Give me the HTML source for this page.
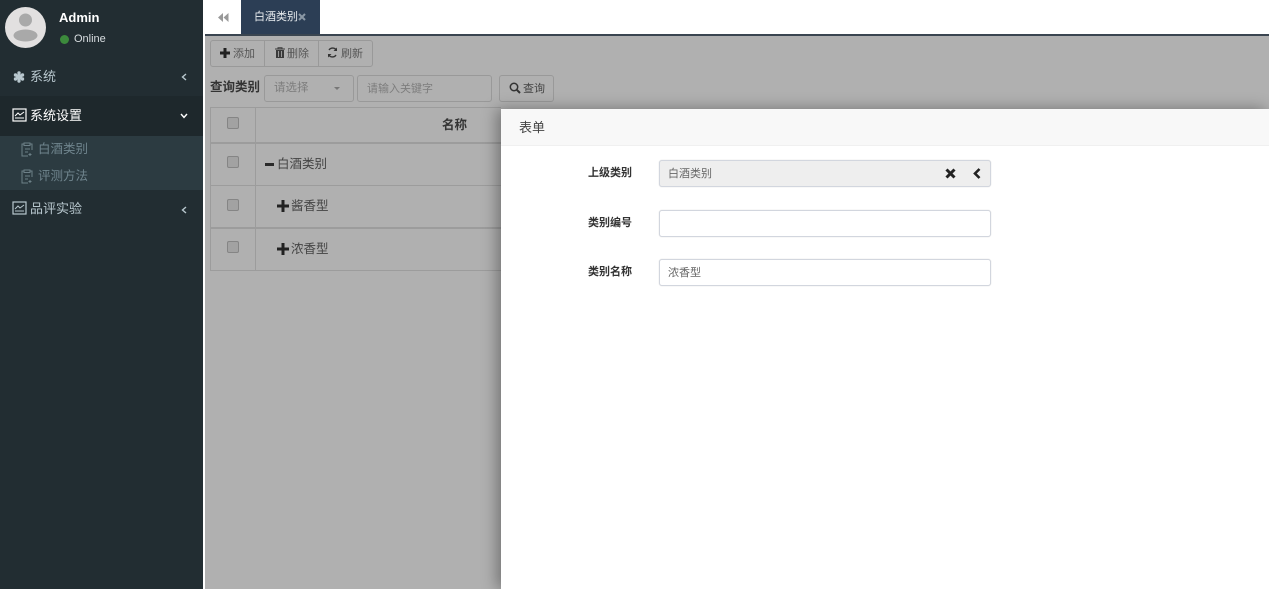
<!DOCTYPE html>
<html lang="zh">
<head>
<meta charset="utf-8">
<style>
html,body{margin:0;padding:0;width:1269px;height:589px;overflow:hidden;background:#fff;font-family:"Liberation Sans","Noto Sans CJK SC",sans-serif;}
.a{position:absolute;white-space:nowrap;}
#side{position:absolute;left:0;top:0;width:203px;height:589px;background:#222d32;}
#main{position:absolute;left:205px;top:36px;width:1064px;height:553px;background:#b0b0b0;}
.btn{position:absolute;box-sizing:border-box;border:1px solid #999;background:#b0b0b0;height:27px;}
.t{font-size:12.5px;line-height:16px;}
.s{font-size:13px;line-height:16px;}
.cb{position:absolute;left:227px;width:10px;height:10px;border:1px solid #858585;border-radius:2px;background:#a2a2a2;}
.hl{position:absolute;left:210px;width:291px;height:1px;background:#9c9c9c;}
.inp{position:absolute;left:659px;width:332px;height:27px;box-sizing:border-box;border:1px solid #d2d6de;border-radius:3px;background:#fff;box-shadow:0 0 1px #ccc;}
.lb{font-size:11px;font-weight:bold;color:#333;line-height:16px;}
</style>
</head>
<body>
<div id="side"></div>
<svg class="a" style="left:5px;top:7px" width="41" height="41" viewBox="0 0 41 41"><circle cx="20.5" cy="20.5" r="20.5" fill="#e2e0e0"/><circle cx="20.5" cy="13" r="6.5" fill="#a9a9a9"/><ellipse cx="20.500" cy="28.500" rx="12" ry="6" fill="#a9a9a9"/></svg>
<div class="a" style="left:59px;top:10px;font-size:13px;font-weight:bold;color:#fff;line-height:16px">Admin</div>
<div class="a" style="left:60px;top:35px;width:9px;height:9px;border-radius:50%;background:#3c8a3c"></div>
<div class="a" style="left:74px;top:32px;font-size:11px;color:#d8dde0;line-height:15px">Online</div>

<svg class="a" style="left:13px;top:71px" width="12" height="12" viewBox="0 0 12 12"><g fill="#b8c7ce"><circle cx="6" cy="6" r="3.2"/><circle cx="6" cy="2" r="1.7"/><circle cx="6" cy="10" r="1.7"/><circle cx="2.5" cy="4" r="1.7"/><circle cx="9.5" cy="4" r="1.7"/><circle cx="2.5" cy="8" r="1.7"/><circle cx="9.5" cy="8" r="1.7"/></g></svg>
<div class="a s" style="left:30px;top:69px;color:#b8c7ce">系统</div>
<svg class="a" style="left:181px;top:73px" width="6" height="8" viewBox="0 0 6 8"><path d="M5 1L1.5 4 5 7" fill="none" stroke="#b8c7ce" stroke-width="1.4"/></svg>

<div class="a" style="left:0;top:96px;width:203px;height:40px;background:#1e282c"></div>
<svg class="a" style="left:12px;top:108px" width="15" height="14" viewBox="0 0 15 14"><rect x="1" y="1" width="13" height="12" fill="none" stroke="#fff" stroke-width="1.2"/><path d="M3 8L6 5l2 2 4-3M3 10h9" fill="none" stroke="#fff"/></svg>
<div class="a s" style="left:30px;top:108px;color:#fff">系统设置</div>
<svg class="a" style="left:180px;top:113px" width="8" height="6" viewBox="0 0 8 6"><path d="M1 1l3 3.4L7 1" fill="none" stroke="#fff" stroke-width="1.4"/></svg>

<div class="a" style="left:0;top:136px;width:203px;height:54px;background:#2c3b41"></div>
<svg class="a" style="left:21px;top:142px" width="13" height="15" viewBox="0 0 13 15"><path d="M3 2H1v12h6M9 2h2v6M3 1h6v2.500H3zM4 7h5M4 10h3M9 11v3M7.500 12.500h3" fill="none" stroke="#6d8088"/></svg>
<div class="a t" style="left:38px;top:141px;color:#6f848d">白酒类别</div>
<svg class="a" style="left:21px;top:169px" width="13" height="15" viewBox="0 0 13 15"><path d="M3 2H1v12h6M9 2h2v6M3 1h6v2.500H3zM4 7h5M4 10h3M9 11v3M7.500 12.500h3" fill="none" stroke="#6d8088"/></svg>
<div class="a t" style="left:38px;top:168px;color:#6f848d">评测方法</div>

<svg class="a" style="left:12px;top:201px" width="15" height="14" viewBox="0 0 15 14"><rect x="1" y="1" width="13" height="12" fill="none" stroke="#b8c7ce" stroke-width="1.2"/><path d="M3 8L6 5l2 2 4-3M3 10h9" fill="none" stroke="#b8c7ce"/></svg>
<div class="a s" style="left:30px;top:201px;color:#b8c7ce">品评实验</div>
<svg class="a" style="left:181px;top:206px" width="6" height="8" viewBox="0 0 6 8"><path d="M5 1L1.500 4 5 7" fill="none" stroke="#b8c7ce" stroke-width="1.4"/></svg>

<!-- top bar -->
<svg class="a" style="left:218px;top:13px" width="11" height="9" viewBox="0 0 11 9"><path d="M5 0v9L0 4.500zM10.500 0v9l-5-4.500z" fill="#999"/></svg>
<div class="a" style="left:241px;top:0;width:79px;height:34px;background:#2c3e55"></div>
<div class="a" style="left:254px;top:9px;font-size:11px;line-height:16px;color:#e8ecef">白酒类别</div>
<svg class="a" style="left:298px;top:13px" width="8" height="8" viewBox="0 0 8 8"><path d="M1 1l6 6M7 1L1 7" stroke="#8b98a5" stroke-width="2"/></svg>
<div class="a" style="left:205px;top:34px;width:1064px;height:2px;background:#3a4550"></div>

<div id="main"></div>

<!-- toolbar -->
<div class="btn" style="left:210px;top:40px;width:55px;border-radius:3px 0 0 3px"></div>
<div class="btn" style="left:264px;top:40px;width:55px"></div>
<div class="btn" style="left:318px;top:40px;width:55px;border-radius:0 3px 3px 0"></div>
<svg class="a" style="left:220px;top:48px" width="10" height="10" viewBox="0 0 10 10"><path d="M5 0v10M0 5h10" stroke="#222" stroke-width="3"/></svg>
<div class="a" style="left:233px;top:46px;font-size:11px;line-height:16px;color:#555">添加</div>
<svg class="a" style="left:275px;top:47px" width="10" height="11" viewBox="0 0 10 11"><path d="M0 2h10M3 2V.700h4V2" fill="none" stroke="#3a3a3a"/><path d="M1 3h8v8H1z" fill="#3a3a3a"/><path d="M3.500 4v6M6.500 4v6" stroke="#b0b0b0" stroke-width=".8"/></svg>
<div class="a" style="left:287px;top:46px;font-size:11px;line-height:16px;color:#555">删除</div>
<svg class="a" style="left:327px;top:47px" width="11" height="11" viewBox="0 0 11 11"><path d="M9.500 3.500A4.300 4.300 0 0 0 2 3M1.500 7.500A4.300 4.300 0 0 0 9 8" fill="none" stroke="#333" stroke-width="1.400"/><path d="M10 .500v3.500H6.500zM1 10.500V7h3.500z" fill="#333"/></svg>
<div class="a" style="left:341px;top:46px;font-size:11px;line-height:16px;color:#555">刷新</div>

<!-- search -->
<div class="a" style="left:210px;top:79px;font-size:12.500px;font-weight:bold;line-height:16px;color:#333">查询类别</div>
<div class="btn" style="left:264px;top:75px;width:90px;border-radius:3px"></div>
<div class="a" style="left:274px;top:80px;font-size:11.500px;line-height:16px;color:#7d7d7d">请选择</div>
<div class="a" style="left:334px;top:87px;width:0;height:0;border-left:3.500px solid transparent;border-right:3.500px solid transparent;border-top:3.500px solid #777"></div>
<div class="btn" style="left:357px;top:75px;width:135px;border-radius:3px"></div>
<div class="a" style="left:367px;top:81px;font-size:11px;line-height:16px;color:#7d7d7d">请输入关键字</div>
<div class="btn" style="left:499px;top:75px;width:55px;border-radius:3px"></div>
<svg class="a" style="left:509px;top:82px" width="12" height="12" viewBox="0 0 12 12"><circle cx="5" cy="5" r="3.700" fill="none" stroke="#333" stroke-width="1.500"/><path d="M7.800 7.800L11 11" stroke="#333" stroke-width="2"/></svg>
<div class="a" style="left:523px;top:81px;font-size:11px;line-height:16px;color:#444">查询</div>

<!-- table -->
<div class="hl" style="top:107px"></div>
<div class="hl" style="top:142px;height:2px"></div>
<div class="hl" style="top:185px"></div>
<div class="hl" style="top:227px;height:2px"></div>
<div class="hl" style="top:270px"></div>
<div class="a" style="left:210px;top:107px;width:1px;height:164px;background:#9c9c9c"></div>
<div class="a" style="left:255px;top:107px;width:1px;height:164px;background:#9c9c9c"></div>
<div class="cb" style="top:117px"></div>
<div class="cb" style="top:156px"></div>
<div class="cb" style="top:199px"></div>
<div class="cb" style="top:241px"></div>
<div class="a" style="left:442px;top:117px;font-size:12.500px;font-weight:bold;line-height:16px;color:#333">名称</div>
<div class="a" style="left:265px;top:163px;width:9px;height:3px;background:#2a2a2a"></div>
<div class="a t" style="left:277px;top:156px;color:#444">白酒类别</div>
<svg class="a" style="left:277px;top:200px" width="12" height="12" viewBox="0 0 12 12"><path d="M6 0v12M0 6h12" stroke="#222" stroke-width="3"/></svg>
<div class="a t" style="left:291px;top:198px;color:#444">酱香型</div>
<svg class="a" style="left:277px;top:243px" width="12" height="12" viewBox="0 0 12 12"><path d="M6 0v12M0 6h12" stroke="#222" stroke-width="3"/></svg>
<div class="a t" style="left:291px;top:241px;color:#444">浓香型</div>

<!-- panel -->
<div class="a" style="left:501px;top:109px;width:768px;height:480px;background:#fff;box-shadow:-4px 0 14px rgba(0,0,0,.35)"></div>
<div class="a" style="left:501px;top:109px;width:768px;height:37px;background:#f8f8f8;border-bottom:1px solid #f0f0f0;box-sizing:border-box"></div>
<div class="a" style="left:519px;top:120px;font-size:13px;line-height:16px;color:#444">表单</div>

<div class="a lb" style="left:588px;top:165px">上级类别</div>
<div class="a lb" style="left:588px;top:215px">类别编号</div>
<div class="a lb" style="left:588px;top:264px">类别名称</div>

<div class="inp" style="top:160px;background:#eee"></div>
<div class="a" style="left:668px;top:166px;font-size:11px;line-height:16px;color:#666">白酒类别</div>
<svg class="a" style="left:945px;top:168px" width="11" height="11" viewBox="0 0 11 11"><path d="M1.500 1.500l8 8M9.500 1.500l-8 8" stroke="#222" stroke-width="3"/></svg>
<svg class="a" style="left:973px;top:168px" width="8" height="11" viewBox="0 0 8 11"><path d="M6.500 1L2 5.500 6.500 10" fill="none" stroke="#222" stroke-width="2.600"/></svg>
<div class="inp" style="top:210px"></div>
<div class="inp" style="top:259px"></div>
<div class="a" style="left:668px;top:265px;font-size:11px;line-height:16px;color:#666">浓香型</div>
</body>
</html>
